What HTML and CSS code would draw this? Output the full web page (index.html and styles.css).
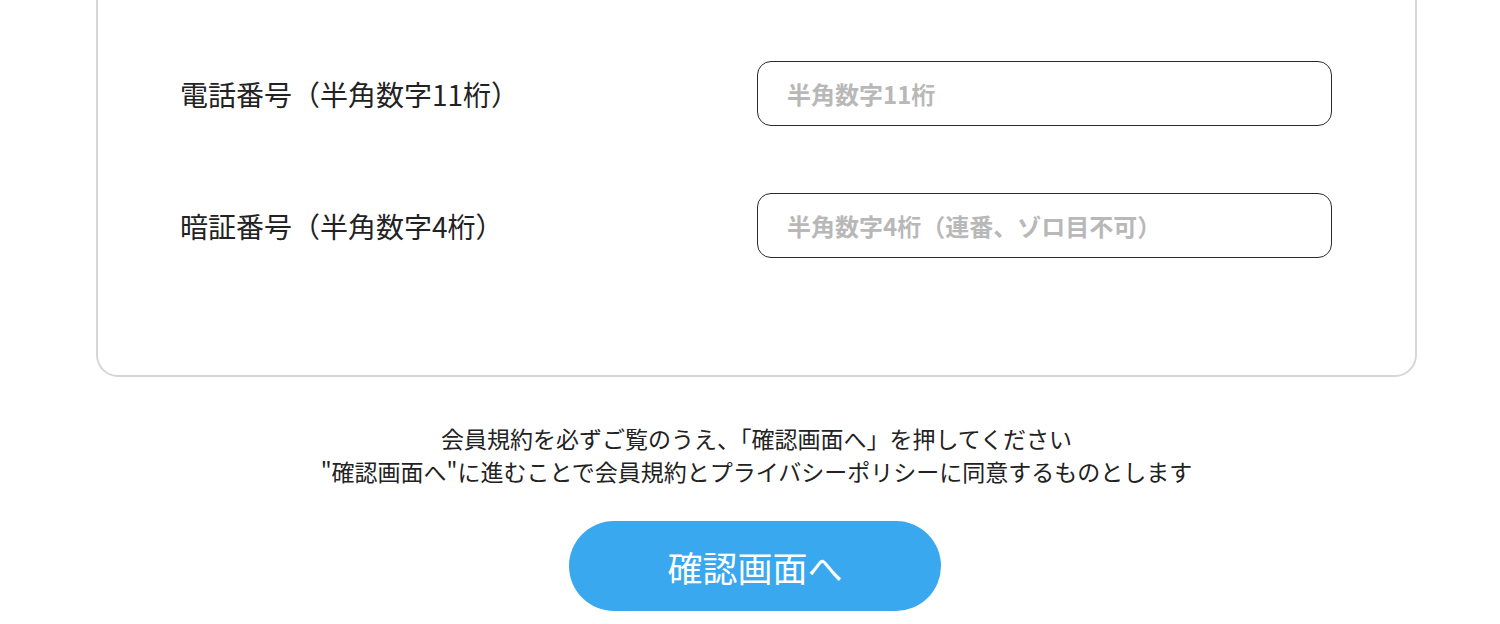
FILE: index.html
```html
<!DOCTYPE html>
<html lang="ja">
<head>
    <meta charset="UTF-8">
    <meta name="viewport" content="width=device-width, initial-scale=1.0">
    <title>会員登録</title>
    <link rel="stylesheet" href="styles.css">
</head>
<body>
    <div class="page">
        <form class="card">
            <div class="row">
                <label class="label" for="tel">電話番号（半角数字11桁）</label>
                <input class="field" id="tel" type="text" placeholder="半角数字11桁">
            </div>
            <div class="row">
                <label class="label" for="pin">暗証番号（半角数字4桁）</label>
                <input class="field" id="pin" type="text" placeholder="半角数字4桁（連番、ゾロ目不可）">
            </div>
        </form>
        <p class="notice">
            会員規約を必ずご覧のうえ、「確認画面へ」を押してください<br>
            "確認画面へ"に進むことで会員規約とプライバシーポリシーに同意するものとします
        </p>
        <div class="actions">
            <button class="submit" type="button">確認画面へ</button>
        </div>
    </div>
</body>
</html>
```

FILE: styles.css
```css
body {
    margin: 0;
    background: #fff;
    color: #222;
    font-family: "Noto Sans CJK JP", "Noto Sans", sans-serif;
    overflow: hidden;
}
.page {
    width: 1321px;
    margin-left: 96px;
}
.card {
    margin-top: -60px;
    padding: 119px 83px 117px 82px;
    border: 2px solid #d6d6d6;
    border-radius: 22px;
    display: flex;
    flex-direction: column;
    gap: 67px;
}
.row {
    display: grid;
    grid-template-columns: 1fr 575px;
    align-items: center;
}
.label {
    font-size: 28px;
    color: #222;
}
.field {
    box-sizing: border-box;
    width: 575px;
    height: 65px;
    border: 1.5px solid #2a2a2a;
    border-radius: 14px;
    padding: 0 29px;
    font-family: inherit;
    font-size: 24px;
    font-weight: bold;
    outline: none;
}
.field::placeholder {
    color: #b8b8b8;
}
.notice {
    margin: 45px 0 0;
    text-align: center;
    font-size: 23px;
    line-height: 33px;
    color: #222;
}
.actions {
    display: flex;
    justify-content: center;
    margin-top: 33px;
    padding-right: 3px;
}
.submit {
    width: 372px;
    height: 90px;
    border: 0;
    border-radius: 45px;
    background: #39a8ef;
    color: #fff;
    font-family: inherit;
    font-size: 35px;
    cursor: pointer;
}
```
